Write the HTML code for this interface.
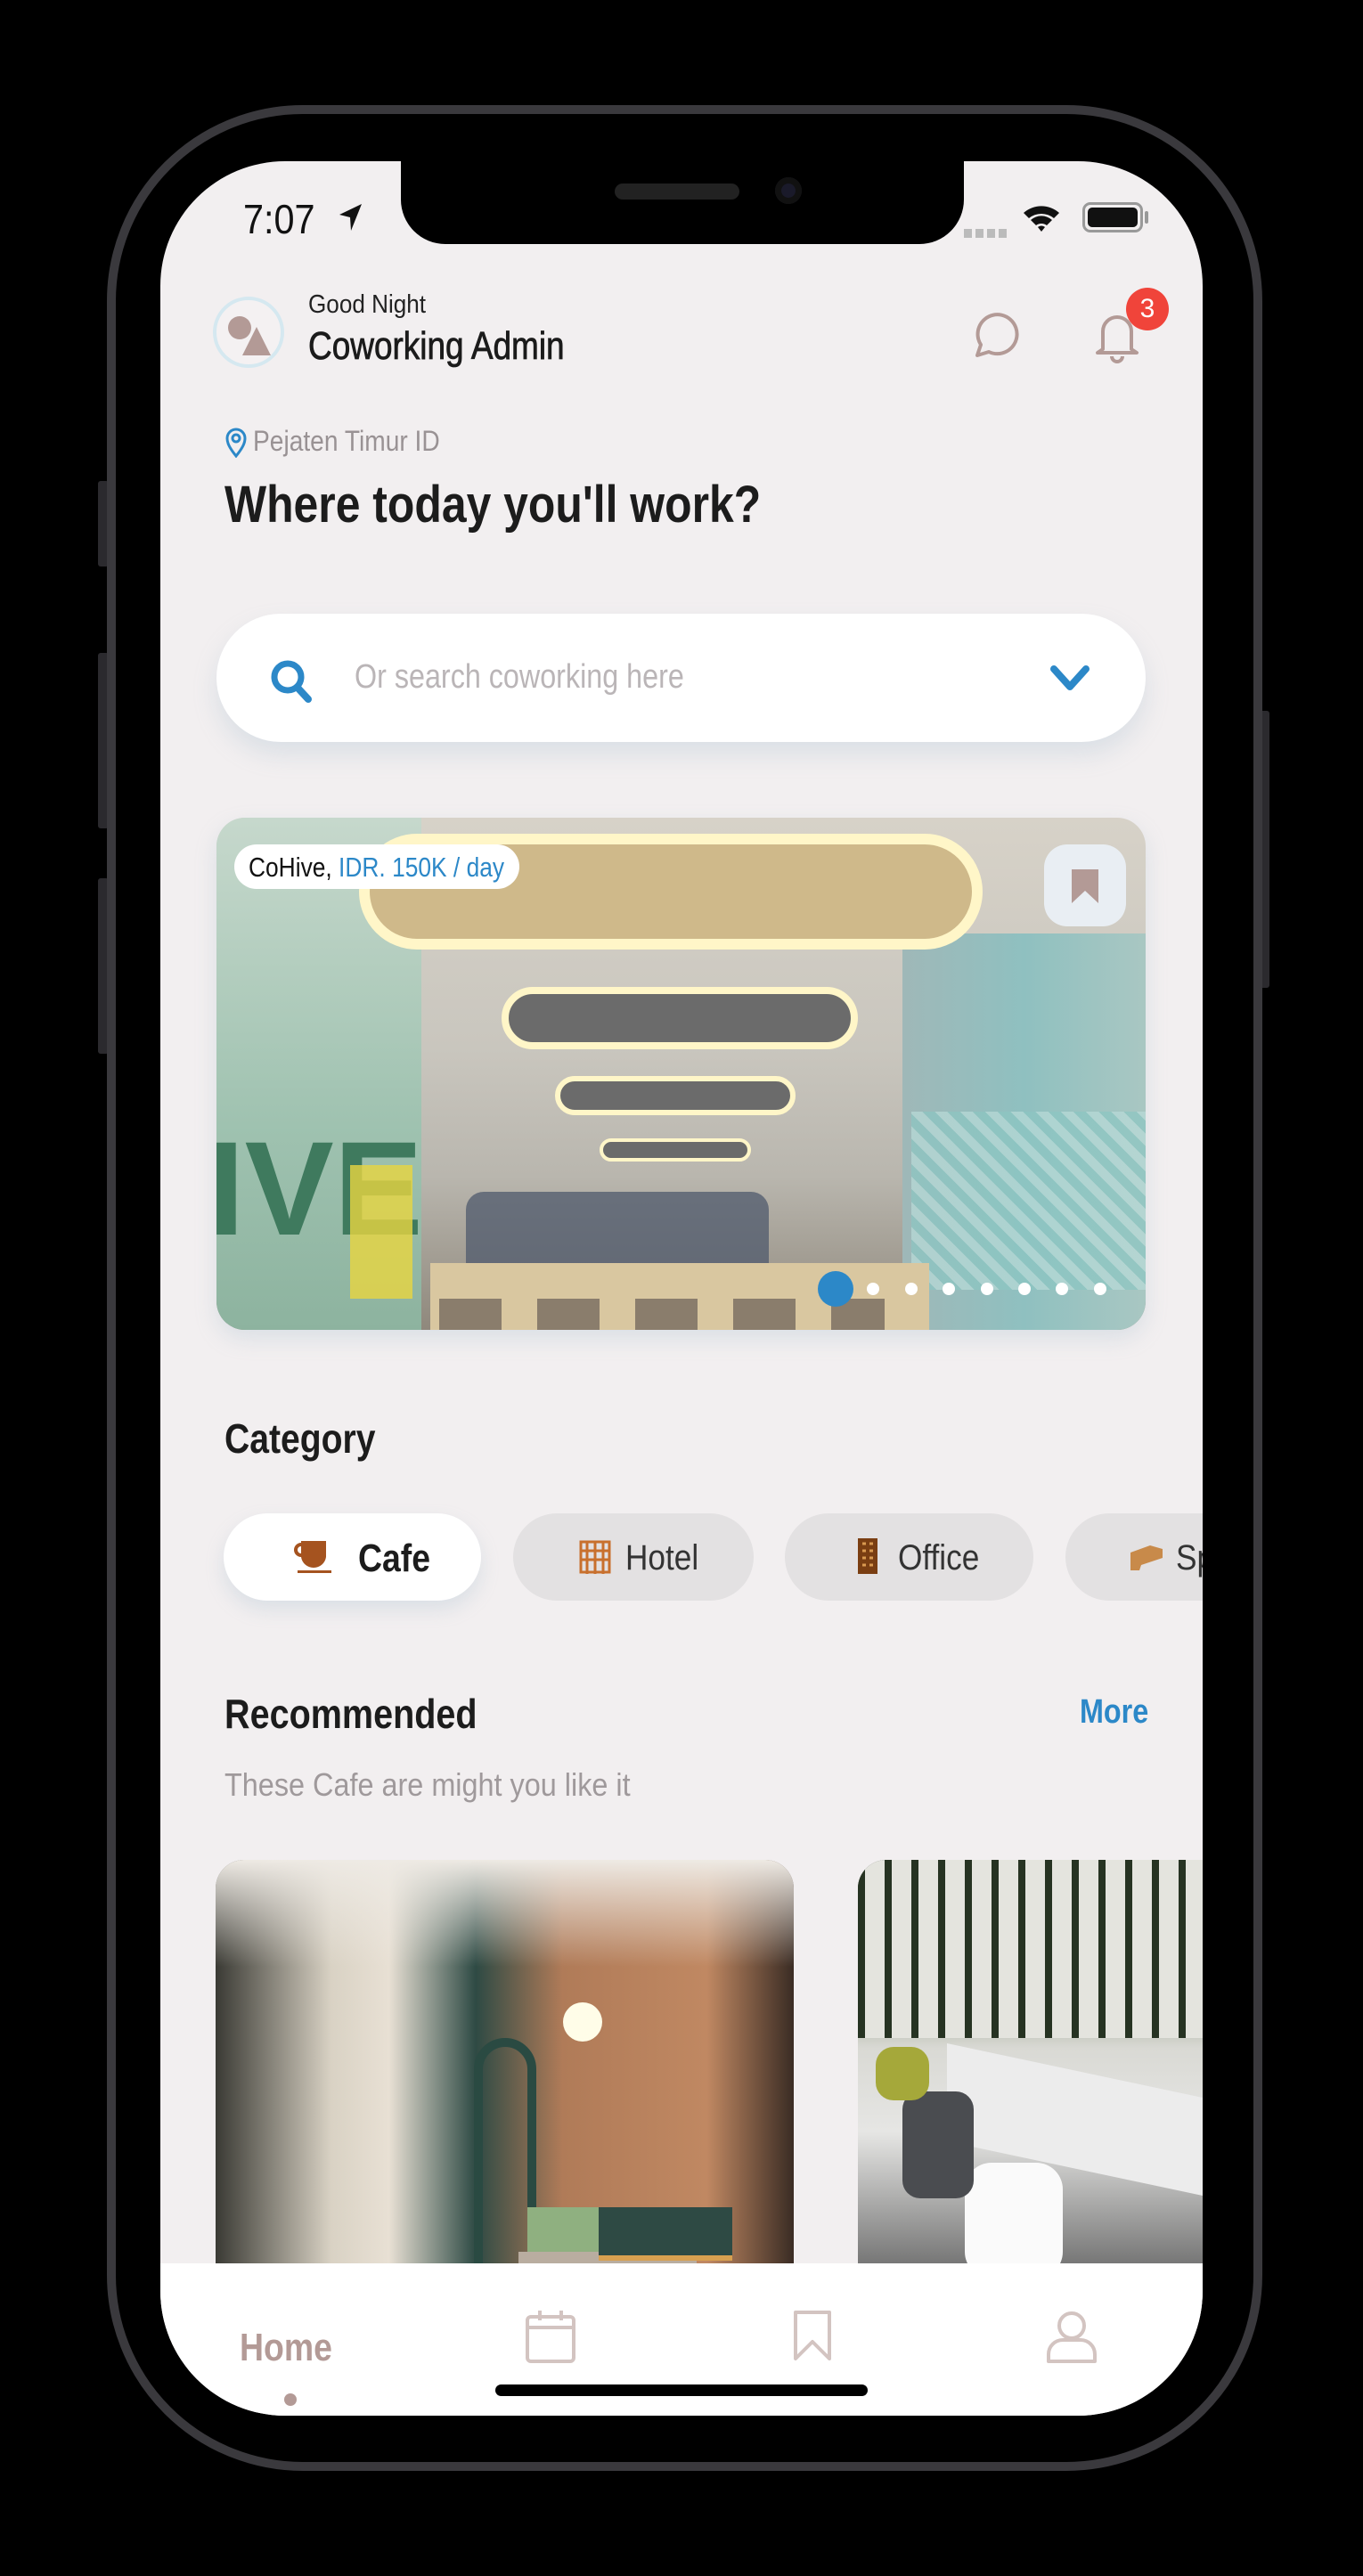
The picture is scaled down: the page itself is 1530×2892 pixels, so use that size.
<!DOCTYPE html>
<html><head><meta charset="utf-8"><style>
*{margin:0;padding:0;box-sizing:border-box}
body{width:1530px;height:2892px;background:#000;position:relative;overflow:hidden;font-family:"Liberation Sans",sans-serif}
.a{position:absolute}
.t{position:absolute;white-space:nowrap;transform-origin:left center}
.frame{left:120px;top:118px;width:1297px;height:2656px;border-radius:220px;border:10px solid #3a393d;background:#000}
.screen{left:180px;top:181px;width:1170px;height:2531px;border-radius:140px;background:#f2eff0;overflow:hidden}
.btn{background:#2b2a2e;border-radius:3px}
.chip{position:absolute;top:1518px;height:98px;border-radius:49px;background:#e3e1e2}
.dot{position:absolute;width:14px;height:14px;border-radius:50%;background:#fff;top:1259px}
</style></head><body>
<div class="a btn" style="left:110px;top:540px;width:12px;height:96px"></div>
<div class="a btn" style="left:110px;top:733px;width:12px;height:197px"></div>
<div class="a btn" style="left:110px;top:986px;width:12px;height:197px"></div>
<div class="a btn" style="left:1413px;top:798px;width:12px;height:311px"></div>
<div class="a frame"></div>
<div class="a screen">
  <!-- status bar -->
  <div class="t" style="left:93px;top:38px;font-size:46px;color:#111;transform:scaleX(.9)">7:07</div>
  <svg class="a" style="left:198px;top:46px" width="30" height="34" viewBox="0 0 30 34"><path d="M28 2 L3 14 L15 17 L16 32 Z" fill="#111"/></svg>
  <div class="a" style="left:902px;top:76px;width:50px;height:10px;background:repeating-linear-gradient(90deg,#bbb 0 9px,transparent 9px 13px)"></div>
  <svg class="a" style="left:967px;top:46px" width="44" height="36" viewBox="0 0 44 36"><path d="M2 12 A30 30 0 0 1 42 12 L36 18 A22 22 0 0 0 8 18Z M10 20 A18 18 0 0 1 34 20 L28 26 A10 10 0 0 0 16 26Z M18 28 A6 6 0 0 1 26 28 L22 33Z" fill="#111"/></svg>
  <div class="a" style="left:1035px;top:46px;width:68px;height:34px;border:3px solid #999;border-radius:9px;padding:3px"><div style="width:100%;height:100%;background:#111;border-radius:5px"></div></div>
  <div class="a" style="left:1105px;top:56px;width:4px;height:14px;background:#999;border-radius:2px"></div>
  <!-- notch -->
  <div class="a" style="left:270px;top:-10px;width:632px;height:103px;background:#000;border-radius:0 0 50px 50px"></div>
  <div class="a" style="left:510px;top:25px;width:140px;height:18px;background:#222;border-radius:9px"></div>
  <div class="a" style="left:690px;top:18px;width:30px;height:30px;background:#1a1a2a;border-radius:50%;box-shadow:inset 0 0 0 7px #111"></div>

  <!-- header -->
  <div class="a" style="left:59px;top:152px;width:80px;height:80px;border-radius:50%;border:4px solid #d5e8f0;background:#f4f1f2"></div>
  <div class="a" style="left:76px;top:174px;width:26px;height:26px;border-radius:50%;background:#b39a96"></div>
  <svg class="a" style="left:90px;top:184px" width="36" height="36"><path d="M18 2 L34 34 L2 34Z" fill="#b39a96"/></svg>
  <div class="t" style="left:166px;top:145px;font-size:29px;color:#222;transform:scaleX(.9)">Good Night</div>
  <div class="t" style="left:166px;top:183px;font-size:44px;color:#1b1b1b;transform:scaleX(.84);-webkit-text-stroke:.8px #1b1b1b">Coworking Admin</div>
  <svg class="a" style="left:909px;top:167px" width="56" height="56" viewBox="0 0 56 56"><path d="M8 51 L12 39 A22 22 0 1 1 21 47 Z" fill="none" stroke="#b39a96" stroke-width="4" stroke-linejoin="round"/></svg>
  <svg class="a" style="left:1046px;top:165px" width="56" height="64" viewBox="0 0 56 64"><path d="M12 46 L12 26 A16 16 0 0 1 44 26 L44 46 L50 50 L6 50 L12 46Z" fill="none" stroke="#b39a96" stroke-width="4" stroke-linejoin="round"/><path d="M22 54 A6 6 0 0 0 34 54" fill="none" stroke="#b39a96" stroke-width="4"/></svg>
  <div class="a" style="left:1084px;top:142px;width:48px;height:48px;border-radius:50%;background:#f0443a;color:#fff;font-size:30px;text-align:center;line-height:48px">3</div>

  <!-- location + headline -->
  <svg class="a" style="left:72px;top:299px" width="26" height="34" viewBox="0 0 26 34"><path d="M13 32 C5 22 3 17 3 12 A10 10 0 0 1 23 12 C23 17 21 22 13 32Z" fill="none" stroke="#2c88c8" stroke-width="3"/><circle cx="13" cy="12" r="4" fill="none" stroke="#2c88c8" stroke-width="3"/></svg>
  <div class="t" style="left:104px;top:296px;font-size:32px;color:#999294;transform:scaleX(.88)">Pejaten Timur ID</div>
  <div class="t" style="left:72px;top:352px;font-size:58px;font-weight:bold;color:#1c1c1c;transform:scaleX(.86)">Where today you'll work?</div>

  <!-- search -->
  <div class="a" style="left:63px;top:508px;width:1043px;height:144px;border-radius:72px;background:#fff;box-shadow:0 14px 26px rgba(150,180,200,.25)"></div>
  <svg class="a" style="left:122px;top:558px" width="50" height="52" viewBox="0 0 50 52"><circle cx="21" cy="21" r="15" fill="none" stroke="#2c88c8" stroke-width="7"/><path d="M32 33 L44 46" stroke="#2c88c8" stroke-width="8" stroke-linecap="round"/></svg>
  <div class="t" style="left:218px;top:558px;font-size:38px;color:#bab5b7;transform:scaleX(.85)">Or search coworking here</div>
  <svg class="a" style="left:997px;top:564px" width="48" height="34" viewBox="0 0 48 34"><path d="M6 6 L24 26 L42 6" fill="none" stroke="#2c88c8" stroke-width="8" stroke-linecap="round" stroke-linejoin="round"/></svg>

  <!-- carousel -->
  <div class="a" style="left:63px;top:737px;width:1043px;height:575px;border-radius:32px;overflow:hidden;background:linear-gradient(180deg,#d7d2c8 0%,#c9c6be 45%,#b9b6ae 70%,#8f887c 100%);box-shadow:0 10px 24px rgba(150,180,200,.25)">
    <div class="a" style="left:0;top:0;width:230px;height:575px;background:linear-gradient(180deg,#c6d8cc,#9fc2b0 60%,#8db39f)"></div>
    <div class="t" style="left:-10px;top:330px;font-size:150px;font-weight:bold;color:#3f7a5e">IVE</div>
    <div class="a" style="left:150px;top:390px;width:70px;height:150px;background:#e8d640;opacity:.8"></div>
    <div class="a" style="left:770px;top:130px;width:273px;height:445px;background:linear-gradient(90deg,#9fb8b8,#8fc0c0 50%,#a9c7c2)"></div>
    <div class="a" style="left:780px;top:330px;width:263px;height:200px;background:repeating-linear-gradient(45deg,#b9dbd8 0 10px,#8cc6c2 10px 20px);opacity:.7"></div>
    <div class="a" style="left:160px;top:18px;width:700px;height:130px;border-radius:65px;border:12px solid #fff6c8;background:#cfb98a"></div>
    <div class="a" style="left:320px;top:190px;width:400px;height:70px;border-radius:35px;border:8px solid #fff6c8;background:#6b6b6b"></div>
    <div class="a" style="left:380px;top:290px;width:270px;height:44px;border-radius:22px;border:6px solid #fff6c8;background:#6b6b6b"></div>
    <div class="a" style="left:430px;top:360px;width:170px;height:26px;border-radius:13px;border:4px solid #fff6c8;background:#6b6b6b"></div>
    <div class="a" style="left:240px;top:500px;width:560px;height:75px;background:#d9c7a0"></div>
    <div class="a" style="left:280px;top:420px;width:340px;height:80px;background:#4f5a6c;opacity:.75;border-radius:20px 20px 0 0"></div>
    <div class="a" style="left:250px;top:540px;width:500px;height:40px;background:repeating-linear-gradient(90deg,#8a7d6c 0 70px,transparent 70px 110px)"></div>
    <div class="a" style="left:20px;top:30px;width:320px;height:50px;border-radius:25px;background:#fff"></div>
    <div class="t" style="left:36px;top:38px;font-size:31px;color:#111;transform:scaleX(.85)">CoHive,<span style="color:#2c88c8"> IDR. 150K / day</span></div>
    <div class="a" style="left:929px;top:30px;width:92px;height:92px;border-radius:26px;background:#e9eef3"></div>
    <svg class="a" style="left:958px;top:56px" width="34" height="42" viewBox="0 0 34 42"><path d="M2 2 H32 V40 L17 26 L2 40Z" fill="#b39a96"/></svg>
  </div>
  <div class="a" style="left:738px;top:1246px;width:40px;height:40px;border-radius:50%;background:#2c88c8"></div>
  <div class="dot" style="left:793px"></div><div class="dot" style="left:836px"></div><div class="dot" style="left:878px"></div><div class="dot" style="left:921px"></div><div class="dot" style="left:963px"></div><div class="dot" style="left:1005px"></div><div class="dot" style="left:1048px"></div>

  <!-- category -->
  <div class="t" style="left:72px;top:1407px;font-size:46px;font-weight:bold;color:#1c1c1c;transform:scaleX(.85)">Category</div>
  <div class="chip" style="left:71px;width:289px;background:#fff;box-shadow:0 10px 20px rgba(150,180,200,.25)"></div>
  <svg class="a" style="left:150px;top:1545px" width="46" height="42" viewBox="0 0 46 42"><path d="M8 4 H36 V22 A14 14 0 0 1 22 34 A14 14 0 0 1 8 22Z" fill="#a5531f"/><path d="M8 8 A6 6 0 0 0 8 20" fill="none" stroke="#a5531f" stroke-width="4"/><rect x="4" y="37" width="38" height="3" fill="#a5531f"/></svg>
  <div class="t" style="left:222px;top:1544px;font-size:44px;font-weight:bold;color:#1c1c1c;transform:scaleX(.85)">Cafe</div>
  <div class="chip" style="left:396px;width:270px"></div>
  <svg class="a" style="left:470px;top:1546px" width="36" height="40" viewBox="0 0 36 40"><rect x="2" y="4" width="32" height="34" fill="none" stroke="#c8702d" stroke-width="3"/><path d="M9 4 V40 M18 4 V40 M27 4 V40 M2 14 H34 M2 24 H34" stroke="#c8702d" stroke-width="3"/></svg>
  <div class="t" style="left:522px;top:1546px;font-size:40px;color:#333;transform:scaleX(.88)">Hotel</div>
  <div class="chip" style="left:701px;width:279px"></div>
  <svg class="a" style="left:780px;top:1544px" width="28" height="44" viewBox="0 0 28 44"><rect x="3" y="2" width="22" height="40" fill="#7a3e12"/><path d="M8 8 H12 M16 8 H20 M8 16 H12 M16 16 H20 M8 24 H12 M16 24 H20 M8 32 H12 M16 32 H20" stroke="#d99a50" stroke-width="3"/></svg>
  <div class="t" style="left:828px;top:1546px;font-size:40px;color:#333;transform:scaleX(.88)">Office</div>
  <div class="chip" style="left:1016px;width:300px"></div>
  <svg class="a" style="left:1085px;top:1548px" width="44" height="36" viewBox="0 0 44 36"><path d="M4 14 L26 6 L40 10 L40 20 L16 28 L14 34 L4 34Z" fill="#c88a4a"/></svg>
  <div class="t" style="left:1140px;top:1546px;font-size:40px;color:#333;transform:scaleX(.88)">Sp</div>

  <!-- recommended -->
  <div class="t" style="left:72px;top:1716px;font-size:46px;font-weight:bold;color:#1c1c1c;transform:scaleX(.86)">Recommended</div>
  <div class="t" style="left:1032px;top:1720px;font-size:38px;font-weight:bold;color:#2c88c8;transform:scaleX(.85)">More</div>
  <div class="t" style="left:72px;top:1802px;font-size:36px;color:#9f999b;transform:scaleX(.9)">These Cafe are might you like it</div>

  <div class="a" style="left:62px;top:1907px;width:649px;height:470px;border-radius:32px 32px 0 0;overflow:hidden;background:linear-gradient(90deg,#3a3a34 0%,#d9d2c4 20%,#e8e0d4 30%,#2e4a44 45%,#b07b58 60%,#c08862 85%,#3a2c24 100%)">
    <div class="a" style="left:0;top:0;width:649px;height:120px;background:linear-gradient(180deg,#eeeae4,rgba(238,234,228,0))"></div>
    <div class="a" style="left:290px;top:200px;width:70px;height:300px;border-radius:35px 35px 0 0;border:10px solid #2a4a42"></div>
    <div class="a" style="left:350px;top:390px;width:80px;height:80px;background:#8fb080"></div>
    <div class="a" style="left:340px;top:440px;width:200px;height:60px;background:#b9ada0"></div>
    <div class="a" style="left:430px;top:390px;width:150px;height:60px;background:#2e4a44;border-bottom:6px solid #d8a050"></div>
    <div class="a" style="left:390px;top:160px;width:44px;height:44px;border-radius:50%;background:#fffde8"></div>
  </div>
  <div class="a" style="left:783px;top:1907px;width:420px;height:470px;border-radius:32px 0 0 0;overflow:hidden;background:linear-gradient(180deg,#2e3a2c 0%,#7b8a6c 25%,#d9d9d4 45%,#e6e6e4 65%,#6a6a6a 100%)">
    <div class="a" style="left:0;top:0;width:420px;height:200px;background:repeating-linear-gradient(90deg,#263322 0 8px,#e4e4de 8px 30px)"></div>
    <div class="a" style="left:100px;top:240px;width:320px;height:110px;background:#ececec;transform:skewY(12deg)"></div>
    <div class="a" style="left:120px;top:340px;width:110px;height:130px;border-radius:30px;background:#fafafa"></div>
    <div class="a" style="left:50px;top:260px;width:80px;height:120px;border-radius:20px;background:#4a4c50"></div>
    <div class="a" style="left:20px;top:210px;width:60px;height:60px;border-radius:20px;background:#a5a83a"></div>
  </div>

  <!-- bottom nav -->
  <div class="a" style="left:0;top:2360px;width:1176px;height:171px;background:#fff"></div>
  <div class="t" style="left:89px;top:2430px;font-size:44px;font-weight:bold;color:#b39a96;transform:scaleX(.85)">Home</div>
  <div class="a" style="left:139px;top:2506px;width:14px;height:14px;border-radius:50%;background:#b39a96"></div>
  <svg class="a" style="left:408px;top:2410px" width="60" height="64" viewBox="0 0 60 64"><rect x="4" y="10" width="52" height="50" rx="4" fill="none" stroke="#d3c4c1" stroke-width="4"/><path d="M4 22 H56 M18 3 V14 M42 3 V14" stroke="#d3c4c1" stroke-width="4"/></svg>
  <svg class="a" style="left:710px;top:2412px" width="44" height="58" viewBox="0 0 44 58"><path d="M3 3 H41 V55 L22 36 L3 55Z" fill="none" stroke="#d3c4c1" stroke-width="4" stroke-linejoin="round"/></svg>
  <svg class="a" style="left:993px;top:2410px" width="60" height="64" viewBox="0 0 60 64"><circle cx="30" cy="20" r="14" fill="none" stroke="#d3c4c1" stroke-width="4"/><path d="M4 60 V52 A16 16 0 0 1 20 36 H40 A16 16 0 0 1 56 52 V60Z" fill="none" stroke="#d3c4c1" stroke-width="4" stroke-linejoin="round"/></svg>
  <div class="a" style="left:376px;top:2496px;width:418px;height:13px;border-radius:7px;background:#000"></div>
</div>
</body></html>
